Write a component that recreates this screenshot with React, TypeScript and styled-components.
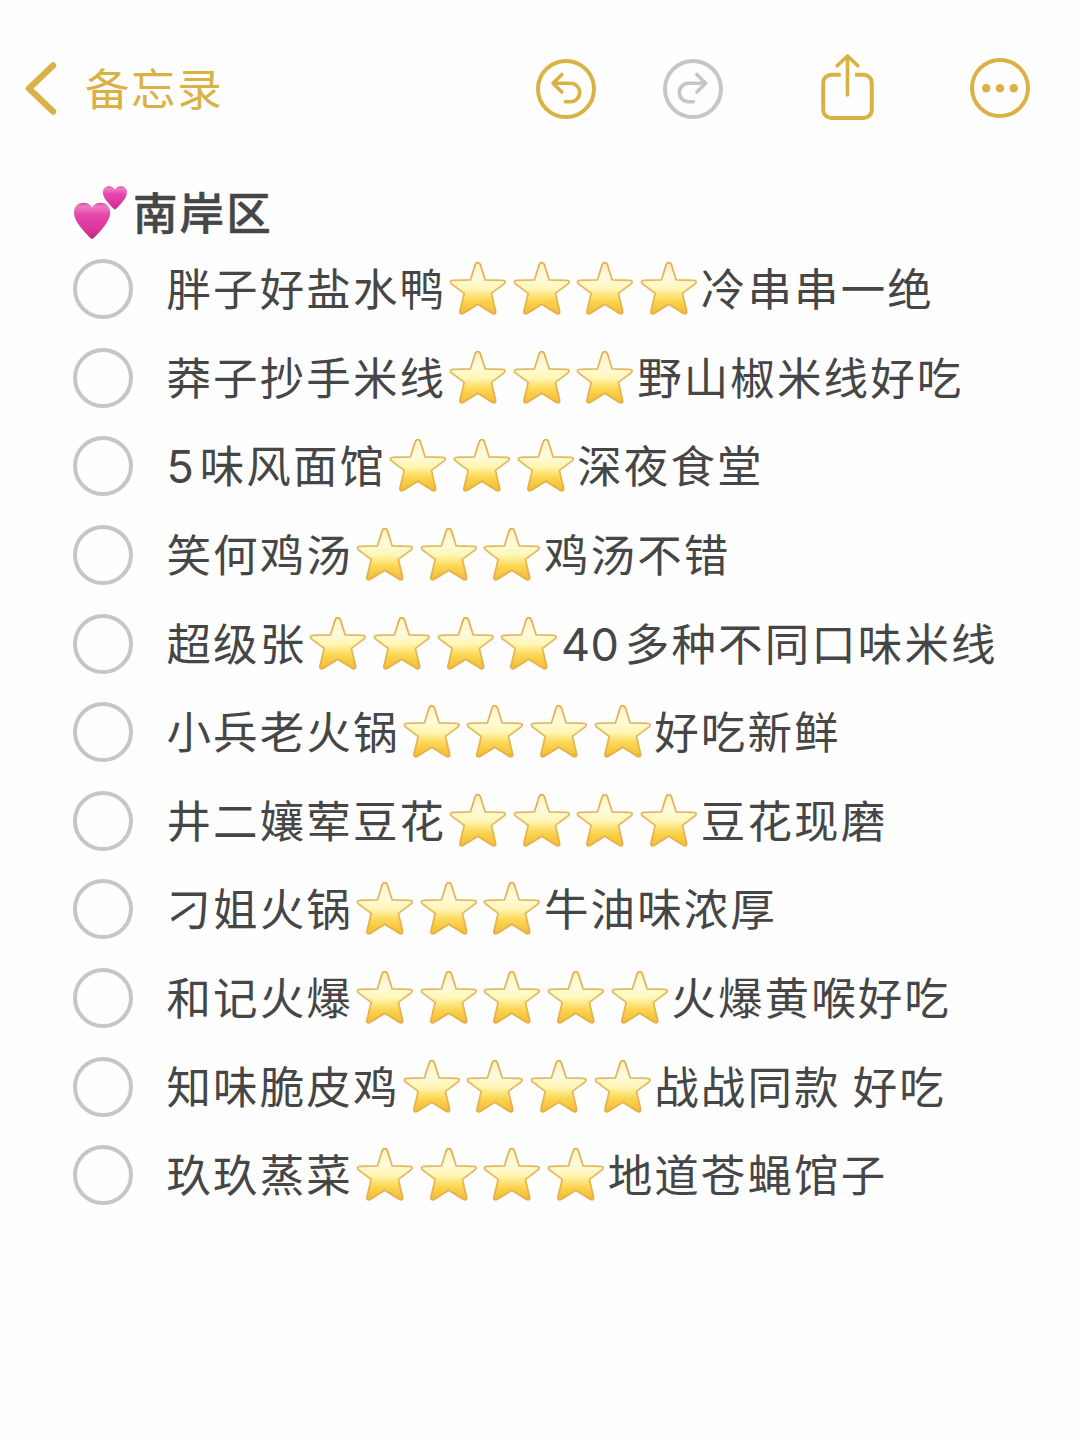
import React from "react";
import styled, { createGlobalStyle } from "styled-components";

const GOLD = "#dab144";
const GREY = "#c6c6c6";
const INK = "#464646";

const GlobalStyle = createGlobalStyle`
  body {
    margin: 0;
    background: #fefefe;
  }
`;

const Page = styled.main`
  width: 1080px;
  height: 1440px;
  box-sizing: border-box;
  overflow: hidden;
  display: flex;
  flex-direction: column;
  background: #fefefe;
  color: ${INK};
  font-family: "Noto Sans CJK SC", sans-serif;
`;

const Toolbar = styled.header`
  display: flex;
  align-items: flex-start;
  height: 130px;
  padding: 48px 48px 0 22px;
  box-sizing: border-box;
`;

const BackButton = styled.button`
  display: flex;
  align-items: center;
  gap: 25px;
  height: 82px;
  margin-right: auto;
  padding: 0;
  border: 0;
  background: none;
  color: ${GOLD};
  font: 400 44.5px/78px "Noto Sans CJK SC", sans-serif;
  letter-spacing: 1.6px;
`;

const BackLabel = styled.span`
  height: 82px;
`;

const IconButton = styled.button<{ $gap: number; $tone?: string }>`
  display: flex;
  margin: 0 0 0 ${(p) => p.$gap}px;
  padding: 0;
  border: 0;
  background: none;
  color: ${(p) => p.$tone ?? GOLD};
`;

const Icon = styled.svg`
  display: block;
  fill: none;
  stroke: currentColor;
  stroke-width: 4;
  stroke-linecap: round;
  stroke-linejoin: round;
`;

const Note = styled.section`
  padding: 54px 0 0 73px;
`;

const Heading = styled.h1`
  display: flex;
  align-items: flex-start;
  gap: 5px;
  height: 61px;
  margin: 0;
  font-size: 44.5px;
  font-weight: 500;
  line-height: 53px;
  letter-spacing: 2.1px;
  -webkit-text-stroke: 0.5px ${INK};
`;

const List = styled.ul`
  margin: 0;
  padding: 0;
  list-style: none;
`;

const Item = styled.li`
  display: flex;
  align-items: center;
  gap: 33px;
  height: 88.6px;
`;

const Check = styled.span`
  flex: none;
  width: 60px;
  height: 60px;
  box-sizing: border-box;
  border: 4px solid ${GREY};
  border-radius: 50%;
`;

const Line = styled.span`
  display: flex;
  align-items: flex-start;
  height: 60px;
  padding-left: 0.5px;
  font-size: 44.5px;
  line-height: 55px;
  letter-spacing: 2.1px;
  white-space: pre;
`;

const Digits = styled.span`
  font-family: Inter, sans-serif;
  font-size: 45px;
  line-height: 0;
  letter-spacing: 0.4px;
  margin-right: 5.5px;
`;

const Stars = styled.span`
  display: flex;
`;

const StarCell = styled.svg`
  display: block;
  flex: none;
  width: 63.7px;
  height: 60px;
`;

const Star = () => (
  <StarCell viewBox="0 0 63.7 60">
    <path
      d="M31.8 3.6 C33.1 3.6 34 4.5 34.5 6 L39.2 20.9 L56.6 21.3 C59.6 21.5 60 23.3 57.9 25 L45.4 34.4 L49.6 52 C50.1 54.6 48.5 55.6 46.2 54.2 L31.8 45.2 L17.4 54.2 C15.1 55.6 13.5 54.6 14 52 L18.2 34.4 L5.7 25 C3.6 23.3 4 21.5 7 21.3 L24.4 20.9 L29.1 6 C29.6 4.5 30.5 3.6 31.8 3.6 Z"
      fill="url(#starFill)"
      stroke="url(#starEdge)"
      strokeWidth="1.8"
      strokeLinejoin="round"
    />
  </StarCell>
);

const Gradients = () => (
  <svg width="0" height="0" style={{ position: "absolute" }} aria-hidden="true">
    <defs>
      <linearGradient id="starFill" x1="0" y1="0" x2="0" y2="1">
        <stop offset="0" stopColor="#fff1b8" />
        <stop offset="0.3" stopColor="#fffbe0" />
        <stop offset="0.52" stopColor="#fff6b4" />
        <stop offset="0.74" stopColor="#fbd650" />
        <stop offset="1" stopColor="#f3b93a" />
      </linearGradient>
      <linearGradient id="starEdge" x1="0" y1="0" x2="0" y2="1">
        <stop offset="0" stopColor="#dfb057" />
        <stop offset="0.5" stopColor="#e5bb62" />
        <stop offset="1" stopColor="#e6ae40" />
      </linearGradient>
      <linearGradient id="heartFill" x1="0" y1="0" x2="0" y2="1">
        <stop offset="0" stopColor="#c94a9a" />
        <stop offset="0.1" stopColor="#ee7cc2" />
        <stop offset="0.35" stopColor="#e546ab" />
        <stop offset="0.7" stopColor="#dd369f" />
        <stop offset="1" stopColor="#bd2c84" />
      </linearGradient>
    </defs>
  </svg>
);

const Hearts = () => (
  <svg width="55" height="60" viewBox="0 0 55 60">
    <path
      d="M19.1 55 C18 55 13.5 50.2 8.5 44.2 C4 38.8 1 33.6 1 28.2 C1 22.6 5 18.7 10.3 18.7 C14.3 18.7 17.5 20.6 19.1 23.6 C20.7 20.6 23.9 18.7 27.9 18.7 C33.2 18.7 37.2 22.6 37.2 28.2 C37.2 33.6 34.2 38.8 29.7 44.2 C24.7 50.2 20.2 55 19.1 55 Z"
      fill="url(#heartFill)"
    />
    <path
      d="M41.9 25.6 C41.1 25.6 38.2 22.5 34.9 18.6 C31.9 15 29.9 12 29.9 8.4 C29.9 4.7 32.5 2.2 36 2.2 C38.6 2.2 40.8 3.5 41.9 5.5 C43 3.5 45.2 2.2 47.8 2.2 C51.3 2.2 53.9 4.7 53.9 8.4 C53.9 12 51.9 15 48.9 18.6 C45.6 22.5 42.7 25.6 41.9 25.6 Z"
      fill="url(#heartFill)"
    />
  </svg>
);

interface Entry {
  name: string;
  stars: number;
  note: string;
}

const entries: Entry[] = [
  { name: "胖子好盐水鸭", stars: 4, note: "冷串串一绝" },
  { name: "莽子抄手米线", stars: 3, note: "野山椒米线好吃" },
  { name: "5味风面馆", stars: 3, note: "深夜食堂" },
  { name: "笑何鸡汤", stars: 3, note: "鸡汤不错" },
  { name: "超级张", stars: 4, note: "40多种不同口味米线" },
  { name: "小兵老火锅", stars: 4, note: "好吃新鲜" },
  { name: "井二孃荤豆花", stars: 4, note: "豆花现磨" },
  { name: "刁姐火锅", stars: 3, note: "牛油味浓厚" },
  { name: "和记火爆", stars: 5, note: "火爆黄喉好吃" },
  { name: "知味脆皮鸡", stars: 4, note: "战战同款 好吃" },
  { name: "玖玖蒸菜", stars: 4, note: "地道苍蝇馆子" },
];

const Mixed = ({ text }: { text: string }) => {
  const digits = text.match(/^\d+/)?.[0] ?? "";
  return (
    <span>
      {digits && <Digits>{digits}</Digits>}
      {text.slice(digits.length)}
    </span>
  );
};

export default function App() {
  return (
    <Page>
      <GlobalStyle />
      <Gradients />
      <Toolbar>
        <BackButton>
          <Icon width="38" height="60" viewBox="0 0 38 60">
            <path d="M31 6.5 L7 29.5 L31 52.5" strokeWidth="6.4" />
          </Icon>
          <BackLabel>备忘录</BackLabel>
        </BackButton>
        <IconButton $gap={0} aria-label="undo">
          <Icon width="64" height="82" viewBox="0 0 64 82">
            <circle cx="32" cy="41" r="28" />
            <path d="M27.8 26.5 L19 35.2 L27.8 44 M19.5 35.2 H36.4 A9.3 9.3 0 0 1 36.4 53.8 H31.3" strokeWidth="3.6" />
          </Icon>
        </IconButton>
        <IconButton $gap={63} $tone={GREY} aria-label="redo">
          <Icon width="64" height="82" viewBox="0 0 64 82">
            <circle cx="32" cy="41" r="28" />
            <path d="M35.9 26.5 L44.7 35.2 L35.9 44 M44.2 35.2 H27.6 A9.3 9.3 0 0 0 27.6 53.8 H32.4" strokeWidth="3.6" />
          </Icon>
        </IconButton>
        <IconButton $gap={93} aria-label="share">
          <Icon width="60" height="82" viewBox="0 0 60 82">
            <path
              d="M22.7 26.8 H13.2 A8 8 0 0 0 5.2 34.8 V62 A8 8 0 0 0 13.2 70 H45.8 A8 8 0 0 0 53.8 62 V34.8 A8 8 0 0 0 45.8 26.8 H37"
              strokeLinecap="butt"
            />
            <path d="M29.5 47 V8.5 M19.2 17.8 L29.5 8 L39.8 17.8" strokeWidth="3.6" />
          </Icon>
        </IconButton>
        <IconButton $gap={90.5} aria-label="more">
          <Icon width="64" height="82" viewBox="0 0 64 82">
            <circle cx="32" cy="40" r="28" />
            <g fill="currentColor" stroke="none">
              <circle cx="18.2" cy="40.2" r="4.2" />
              <circle cx="32" cy="40.2" r="4.2" />
              <circle cx="45.8" cy="40.2" r="4.2" />
            </g>
          </Icon>
        </IconButton>
      </Toolbar>
      <Note>
        <Heading>
          <Hearts />
          南岸区
        </Heading>
        <List>
          {entries.map((e) => (
            <Item key={e.name}>
              <Check />
              <Line>
                <Mixed text={e.name} />
                <Stars>
                  {Array.from({ length: e.stars }, (_, i) => (
                    <Star key={i} />
                  ))}
                </Stars>
                <Mixed text={e.note} />
              </Line>
            </Item>
          ))}
        </List>
      </Note>
    </Page>
  );
}
